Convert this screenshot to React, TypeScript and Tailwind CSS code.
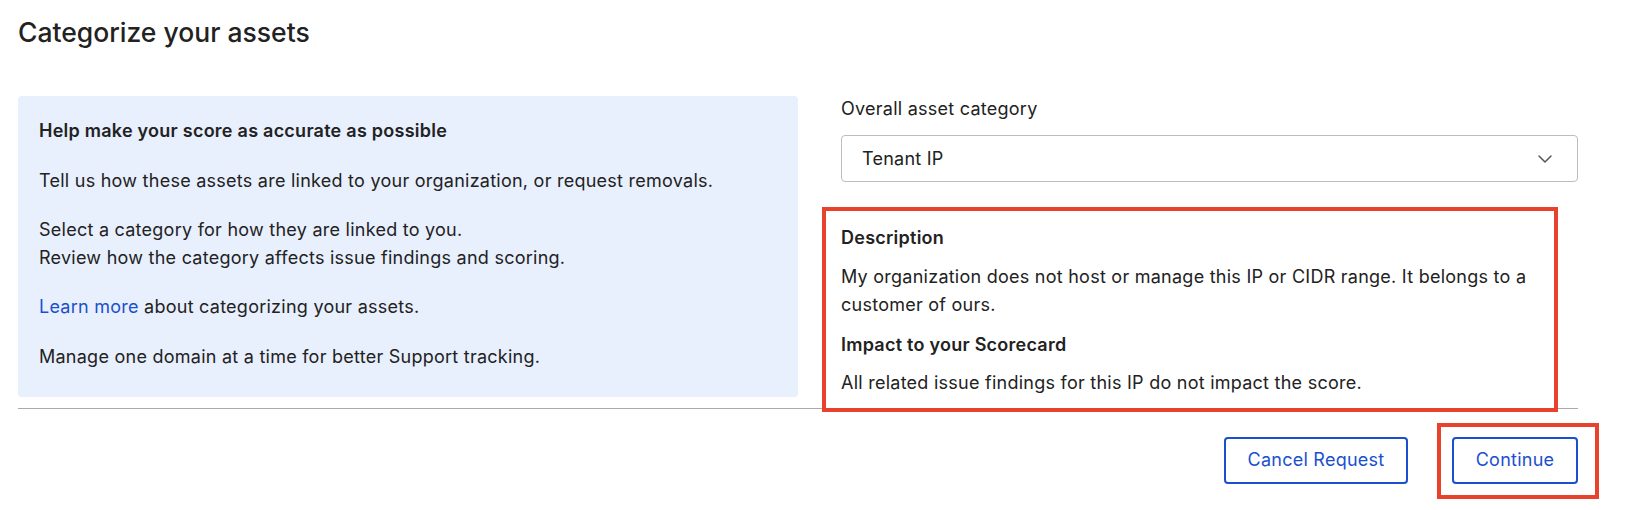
import { ChevronDown } from 'lucide-react';

const HELP_LINES = [
  ['Select a category for how they are linked to you.', 'Review how the category affects issue findings and scoring.'],
];

function HelpPanel() {
  return (
    <div className="bg-[#e8effd] rounded-[4px] px-[21px] pt-[21px] pb-[26px] text-[18px] tracking-[0.25px] leading-[28px] text-[#222]">
      <p className="font-semibold">Help make your score as accurate as possible</p>
      <p className="mt-[22px]">Tell us how these assets are linked to your organization, or request removals.</p>
      {HELP_LINES.map((lines) => (
        <p key={lines[0]} className="mt-[21px]">
          {lines[0]}
          <br />
          {lines[1]}
        </p>
      ))}
      <p className="mt-[21px]">
        <a href="#" className="text-[#1a4fd0]">Learn more</a> about categorizing your assets.
      </p>
      <p className="mt-[22px]">Manage one domain at a time for better Support tracking.</p>
    </div>
  );
}

function CategoryColumn() {
  return (
    <div className="text-[18px] tracking-[0.25px] text-[#222]">
      <label className="block leading-[24px] pt-[1px]">Overall asset category</label>
      <div className="mt-[14px] h-[47px] border border-[#bdbdbd] rounded-[4px] flex items-center justify-between pl-[20px] pr-[20px]">
        <span>Tenant IP</span>
        <ChevronDown size={24} strokeWidth={1.5} className="text-[#555]" />
      </div>

      <div className="relative mt-[42px] leading-[28px]">
        <p className="font-semibold">Description</p>
        <p className="mt-[11px]">
          My organization does not host or manage this IP or CIDR range. It belongs to a customer of ours.
        </p>
        <p className="mt-[12px] font-semibold">Impact to your Scorecard</p>
        <p className="mt-[10px]">All related issue findings for this IP do not impact the score.</p>
        <div className="pointer-events-none absolute left-[-19px] right-[20px] top-[-17px] bottom-[-15px] border-4 border-[#e8412c]" />
      </div>
    </div>
  );
}

export default function App() {
  return (
    <div className="bg-white min-h-[510px] font-['Inter',sans-serif] text-[#222]">
      <div className="w-[1560px] ml-[18px] pt-[16px]">
        <h1 className="text-[26.5px] leading-[32px] font-medium">Categorize your assets</h1>

        <div className="mt-[48px] grid grid-cols-[780px_737px] gap-x-[43px]">
          <HelpPanel />
          <CategoryColumn />
        </div>

        <div className="mt-[11px] h-px bg-[#aaaaaa]" />

        <div className="mt-[28px] flex justify-end gap-[44px] text-[18px] tracking-[0.25px]">
          <button className="w-[184px] h-[47px] pb-[2px] border-2 border-[#1a4fd0] rounded-[4px] text-[#1a4fd0] bg-white">
            Cancel Request
          </button>
          <div className="relative">
            <button className="w-[126px] h-[47px] pb-[2px] border-2 border-[#1a4fd0] rounded-[4px] text-[#1a4fd0] bg-white">
              Continue
            </button>
            <div className="pointer-events-none absolute left-[-15px] right-[-21px] top-[-14px] bottom-[-15px] border-4 border-[#e8412c]" />
          </div>
        </div>
      </div>
    </div>
  );
}
